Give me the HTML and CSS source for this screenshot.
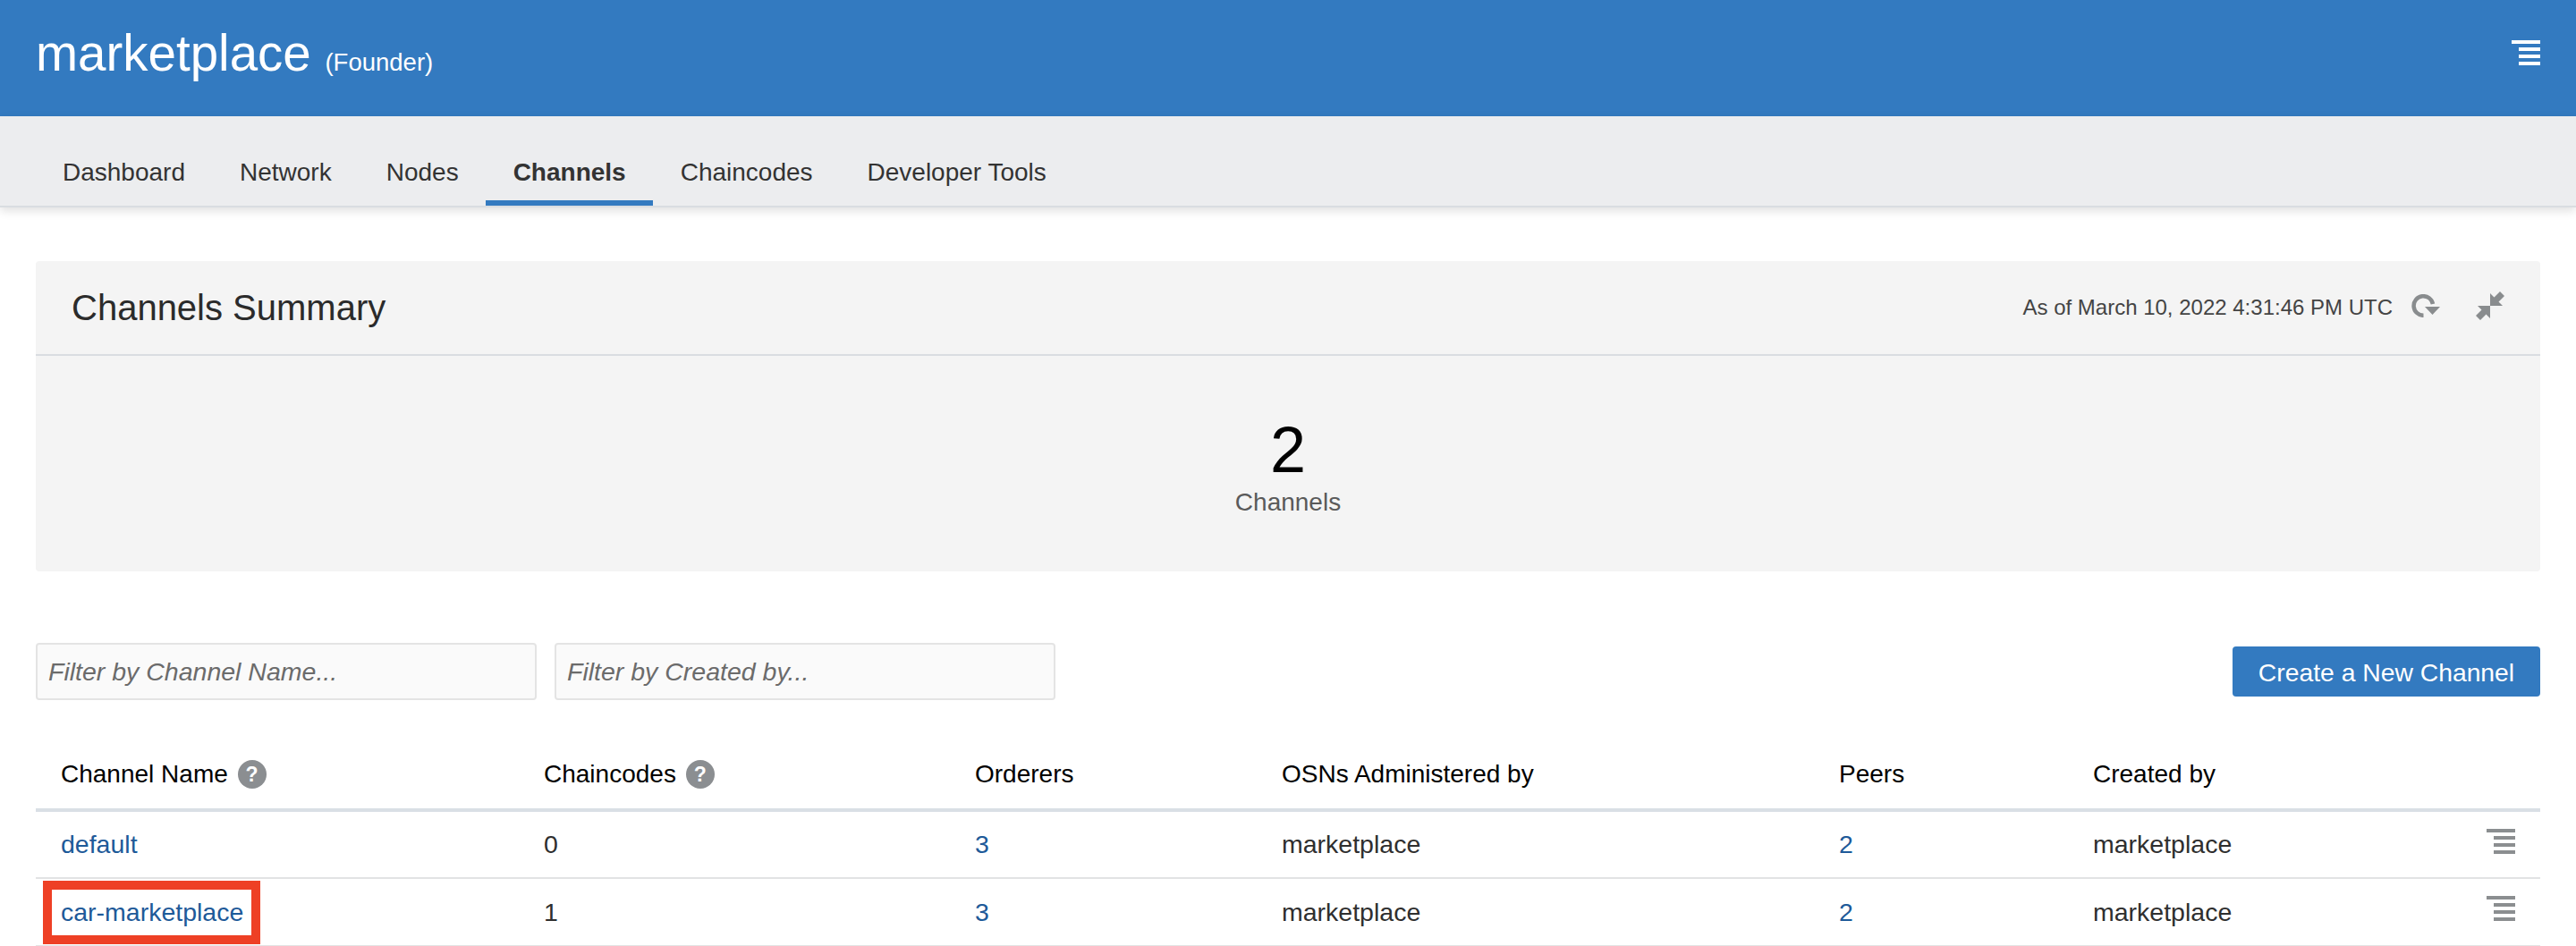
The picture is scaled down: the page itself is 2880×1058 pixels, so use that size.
FILE: index.html
```html
<!DOCTYPE html>
<html>
  <head>
    <title>marketplace</title>
    <link rel="stylesheet" href="styles.css">
  </head>

  <body>
    <header class="app-header">
      <h1 class="app-title">marketplace <small>(Founder)</small></h1>
      <svg class="menu-icon menu-icon-white" viewBox="0 0 32 28"><path d="M0 0h32v4H0zM8 8h24v4H8zM8 16h24v4H8zM8 24h24v4H8z"/></svg>
    </header>

    <nav class="tabs">
      <a class="tab">Dashboard</a>
      <a class="tab">Network</a>
      <a class="tab">Nodes</a>
      <a class="tab active">Channels</a>
      <a class="tab">Chaincodes</a>
      <a class="tab">Developer Tools</a>
    </nav>

    <main class="content">
      <section class="summary">
        <div class="summary-head">
          <h2>Channels Summary</h2>
          <div class="summary-tools">
            <span class="as-of">As of March 10, 2022 4:31:46 PM UTC</span>
            <!-- refresh -->
            <svg class="tool-icon refresh" viewBox="0 0 32 26">
              <path d="M24 11A10.800 10.800 0 1 0 13.500 23.800" fill="none" stroke="#898c8e" stroke-width="4.500"/>
              <path d="M15 14h17l-8.500 9z" fill="#898c8e"/>
            </svg>
            <!-- collapse -->
            <svg class="tool-icon collapse" viewBox="0 0 32 32">
              <path d="M16 2v14h14l-4.500-4.500L32 5l-5-5-6.500 6.500z" fill="#898c8e"/>
              <path d="M16 30V16H2l4.500 4.500L0 27l5 5 6.500-6.500z" fill="#898c8e"/>
            </svg>
          </div>
        </div>
        <div class="summary-body">
          <div class="big-num">2</div>
          <div class="big-label">Channels</div>
        </div>
      </section>

      <div class="toolbar">
        <div class="filters">
          <input class="filter" type="text" placeholder="Filter by Channel Name...">
          <input class="filter" type="text" placeholder="Filter by Created by...">
        </div>
        <button class="btn-primary">Create a New Channel</button>
      </div>

      <table class="channels">
        <colgroup>
          <col class="col-name"><col class="col-code"><col class="col-ord">
          <col class="col-osn"><col class="col-peer"><col class="col-by">
        </colgroup>
        <thead>
          <tr>
            <th>Channel Name <span class="help">?</span></th>
            <th>Chaincodes <span class="help">?</span></th>
            <th>Orderers</th>
            <th>OSNs Administered by</th>
            <th>Peers</th>
            <th>Created by</th>
          </tr>
        </thead>
        <tbody>
          <tr>
            <td><a>default</a></td>
            <td>0</td>
            <td><a>3</a></td>
            <td>marketplace</td>
            <td><a>2</a></td>
            <td class="last-cell">marketplace
              <svg class="menu-icon menu-icon-grey" viewBox="0 0 32 28"><path d="M0 0h32v4H0zM8 8h24v4H8zM8 16h24v4H8zM8 24h24v4H8z"/></svg>
            </td>
          </tr>
          <tr>
            <td><a class="marked">car-marketplace</a></td>
            <td>1</td>
            <td><a>3</a></td>
            <td>marketplace</td>
            <td><a>2</a></td>
            <td class="last-cell">marketplace
              <svg class="menu-icon menu-icon-grey" viewBox="0 0 32 28"><path d="M0 0h32v4H0zM8 8h24v4H8zM8 16h24v4H8zM8 24h24v4H8z"/></svg>
            </td>
          </tr>
        </tbody>
      </table>
    </main>
  </body>
</html>
```

FILE: styles.css
```css
html,
body {
  margin: 0;
  padding: 0;
  height: 100%;
  overflow: hidden;
  background: #fff;
  font-family: "Liberation Sans", Arial, sans-serif;
  color: #2f2f2f;
}

/* Top blue bar */
.app-header {
  height: 130px;
  background: #337ac0;
  color: #fff;
  display: flex;
  align-items: flex-start;
  justify-content: space-between;
  padding: 0 40px;
  box-sizing: border-box;
}

.app-title {
  margin: 26px 0 0;
  font-size: 56.500px;
  line-height: 68px;
  font-weight: normal;
}

.app-title small {
  font-size: 27.500px;
}

.menu-icon {
  display: block;
  width: 32px;
  height: 28px;
}

.menu-icon-white {
  margin-top: 45px;
  fill: #fff;
}

.menu-icon-grey {
  fill: #8b8e90;
  position: absolute;
  right: 28px;
  top: 19px;
}

/* Tabs */
.tabs {
  height: 100px;
  background: #ecedef;
  border-bottom: 2px solid #d9dde1;
  box-shadow: 0 4px 10px rgba(0, 0, 0, 0.12);
  display: flex;
  align-items: flex-end;
  padding-left: 40px;
}

.tab {
  padding: 0 30.500px;
  height: 94px;
  line-height: 126px;
  font-size: 28px;
  color: #333;
  border-bottom: 6px solid transparent;
}

.tab:first-child {
  padding-left: 30px;
}

.tab.active {
  font-weight: bold;
  border-bottom-color: #337ac0;
}

.content {
  padding: 60px 40px 0;
}

/* Summary panel */
.summary {
  background: #f4f4f4;
  border-radius: 4px;
  height: 347px;
}

.summary-head {
  height: 104px;
  border-bottom: 2px solid #d9dde1;
  display: flex;
  align-items: center;
  justify-content: space-between;
  padding: 0 40px;
}

.summary-head h2 {
  margin: 0;
  font-size: 40px;
  font-weight: normal;
  color: #2b2b2b;
}

.summary-tools {
  display: flex;
  align-items: center;
}

.as-of {
  font-size: 24px;
  color: #444;
}

.tool-icon {
  display: block;
}

.refresh {
  width: 32px;
  height: 26px;
  margin: -4px 0 0 21px;
}

.collapse {
  width: 32px;
  height: 32px;
  margin: -5px 0 0 40px;
}

.summary-body {
  text-align: center;
  padding-top: 67px;
}

.big-num {
  font-size: 72px;
  line-height: 76px;
  color: #000;
}

.big-label {
  font-size: 28px;
  line-height: 42px;
  color: #5a5a5a;
}

/* Filters and create button */
.toolbar {
  display: flex;
  align-items: center;
  justify-content: space-between;
  margin-top: 80px;
}

.filters {
  display: flex;
  gap: 20px;
}

.filter {
  width: 560px;
  height: 64px;
  box-sizing: border-box;
  padding: 0 12px;
  background: #fafafa;
  border: 2px solid #e4e4e4;
  border-radius: 4px;
  font-family: inherit;
  font-size: 28.500px;
  font-style: italic;
}

.filter::placeholder {
  color: #6b6b6b;
  opacity: 1;
}

.btn-primary {
  width: 344px;
  height: 56px;
  border: none;
  border-radius: 4px;
  background: #337ac0;
  color: #fff;
  font-family: inherit;
  font-size: 28.300px;
  padding: 2px 0 0;
}

/* Channel table */
.channels {
  width: 100%;
  margin-top: 40px;
  border-collapse: collapse;
  table-layout: fixed;
  font-size: 28px;
}

.col-name { width: 540px; }
.col-code { width: 482px; }
.col-ord { width: 343px; }
.col-osn { width: 623px; }
.col-peer { width: 284px; }

.channels th {
  height: 83px;
  padding: 4px 0 0 28px;
  text-align: left;
  font-weight: normal;
  color: #000;
  border-bottom: 4px solid #d9dfe5;
  box-sizing: border-box;
}

.channels td {
  height: 76px;
  padding: 0 0 0 28px;
  font-size: 28.500px;
  border-bottom: 2px solid #e2e3e4;
  box-sizing: border-box;
}

.channels a {
  color: #1e5a99;
}

.last-cell {
  position: relative;
}

.help {
  display: inline-block;
  width: 32px;
  height: 32px;
  margin: -8px 0 -8px 3px;
  border-radius: 50%;
  background: #8b8e91;
  color: #fff;
  font-size: 23px;
  font-weight: bold;
  line-height: 32px;
  text-align: center;
  vertical-align: 1px;
}

/* red annotation box drawn over the row */
.marked {
  position: relative;
}

.marked::after {
  content: "";
  position: absolute;
  left: -20px;
  right: -19px;
  top: -19px;
  bottom: -20px;
  border: 10px solid #ee4025;
}
```
